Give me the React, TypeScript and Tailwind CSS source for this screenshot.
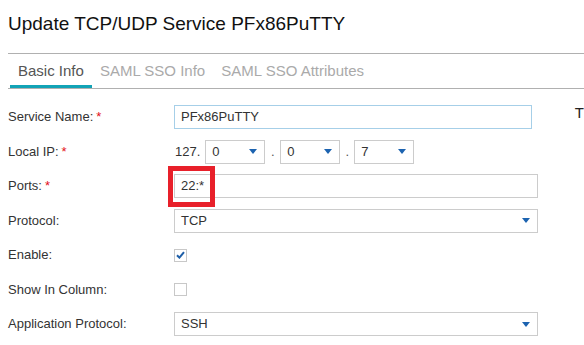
import { ReactNode } from "react";

function Arrow() {
  return (
    <svg width="8" height="5" viewBox="0 0 8 5" className="shrink-0">
      <path d="M0 0 H8 L4 5 Z" fill="#1c63b0" />
    </svg>
  );
}

function Label({ text, required }: { text: string; required?: boolean }) {
  return (
    <div className="w-[174px] shrink-0 pl-2 text-[13px] text-[#333]">
      {text}
      {required && <span className="ml-[3px] text-[#e3101a]">*</span>}
    </div>
  );
}

function Row({ children }: { children: ReactNode }) {
  return <div className="flex h-6 items-center">{children}</div>;
}

function Select({ value, width }: { value: string; width: string }) {
  return (
    <div
      className={`flex h-6 items-center justify-between border border-[#cccccc] pl-[6px] pr-[7px] text-[13px] text-[#333] ${width}`}
    >
      <span>{value}</span>
      <Arrow />
    </div>
  );
}

function Checkbox({ checked }: { checked?: boolean }) {
  return (
    <div className="flex h-[13px] w-[13px] items-center justify-center border border-[#c8c8c8] bg-white">
      {checked && (
        <svg width="9" height="8" viewBox="0 0 9 8">
          <path
            d="M1 4.2 L3.4 6.6 L8 1.2"
            stroke="#1f5fa8"
            strokeWidth="2"
            fill="none"
          />
        </svg>
      )}
    </div>
  );
}

export default function App() {
  const tabs = ["Basic Info", "SAML SSO Info", "SAML SSO Attributes"];

  return (
    <div className="relative h-[345px] w-[584px] overflow-hidden bg-white font-['Liberation_Sans',Arial,sans-serif]">
      <h1 className="pl-2 pt-[13px] text-[19px] leading-[22px] text-[#111]">
        Update TCP/UDP Service PFx86PuTTY
      </h1>

      <div className="ml-2 mt-[18px] border-t border-[#b0b0b0]">
        <div className="flex h-[35px] border-b border-[#b0b0b0] pl-0.5">
          {tabs.map((t, i) => (
            <div
              key={t}
              className={
                i === 0
                  ? "flex items-center border-b-[3px] border-t-[3px] border-b-[#12a3b6] border-t-transparent px-2 text-[15px] text-[#555]"
                  : "flex items-center border-b-[3px] border-t-[3px] border-transparent px-2 text-[15px] text-[#aaaaaa]"
              }
            >
              {t}
            </div>
          ))}
        </div>
      </div>

      <div className="mt-4 flex flex-col gap-[10.5px]">
        <Row>
          <Label text="Service Name:" required />
          <div className="flex h-6 w-[364px] items-center border border-[#a6cfe8] px-[6px] text-[13px] text-[#333]">
            PFx86PuTTY
          </div>
          <span className="ml-[43px] self-start whitespace-nowrap text-[15px] leading-none text-[#222]">
            T
          </span>
        </Row>

        <Row>
          <Label text="Local IP:" required />
          <span className="pl-px text-[13px] text-[#333]">127.</span>
          <div className="ml-[5px] flex items-center">
            <Select value="0" width="w-[60px]" />
            <span className="w-[15px] text-center text-[13px] text-[#555]">.</span>
            <Select value="0" width="w-[60px]" />
            <span className="w-[14px] text-center text-[13px] text-[#555]">.</span>
            <Select value="7" width="w-[60px]" />
          </div>
        </Row>

        <Row>
          <Label text="Ports:" required />
          <div className="relative">
            <div className="flex h-6 w-[364px] items-center border border-[#cccccc] px-[6px] text-[13px] text-[#333]">
              22:*
            </div>
            <div className="absolute left-[-6px] top-[-8px] h-[41px] w-[47px] border-[5px] border-[#e8202a]" />
          </div>
        </Row>

        <Row>
          <Label text="Protocol:" />
          <Select value="TCP" width="w-[364px]" />
        </Row>

        <Row>
          <Label text="Enable:" />
          <Checkbox checked />
        </Row>

        <Row>
          <Label text="Show In Column:" />
          <Checkbox />
        </Row>

        <Row>
          <Label text="Application Protocol:" />
          <Select value="SSH" width="w-[364px]" />
        </Row>
      </div>
    </div>
  );
}
